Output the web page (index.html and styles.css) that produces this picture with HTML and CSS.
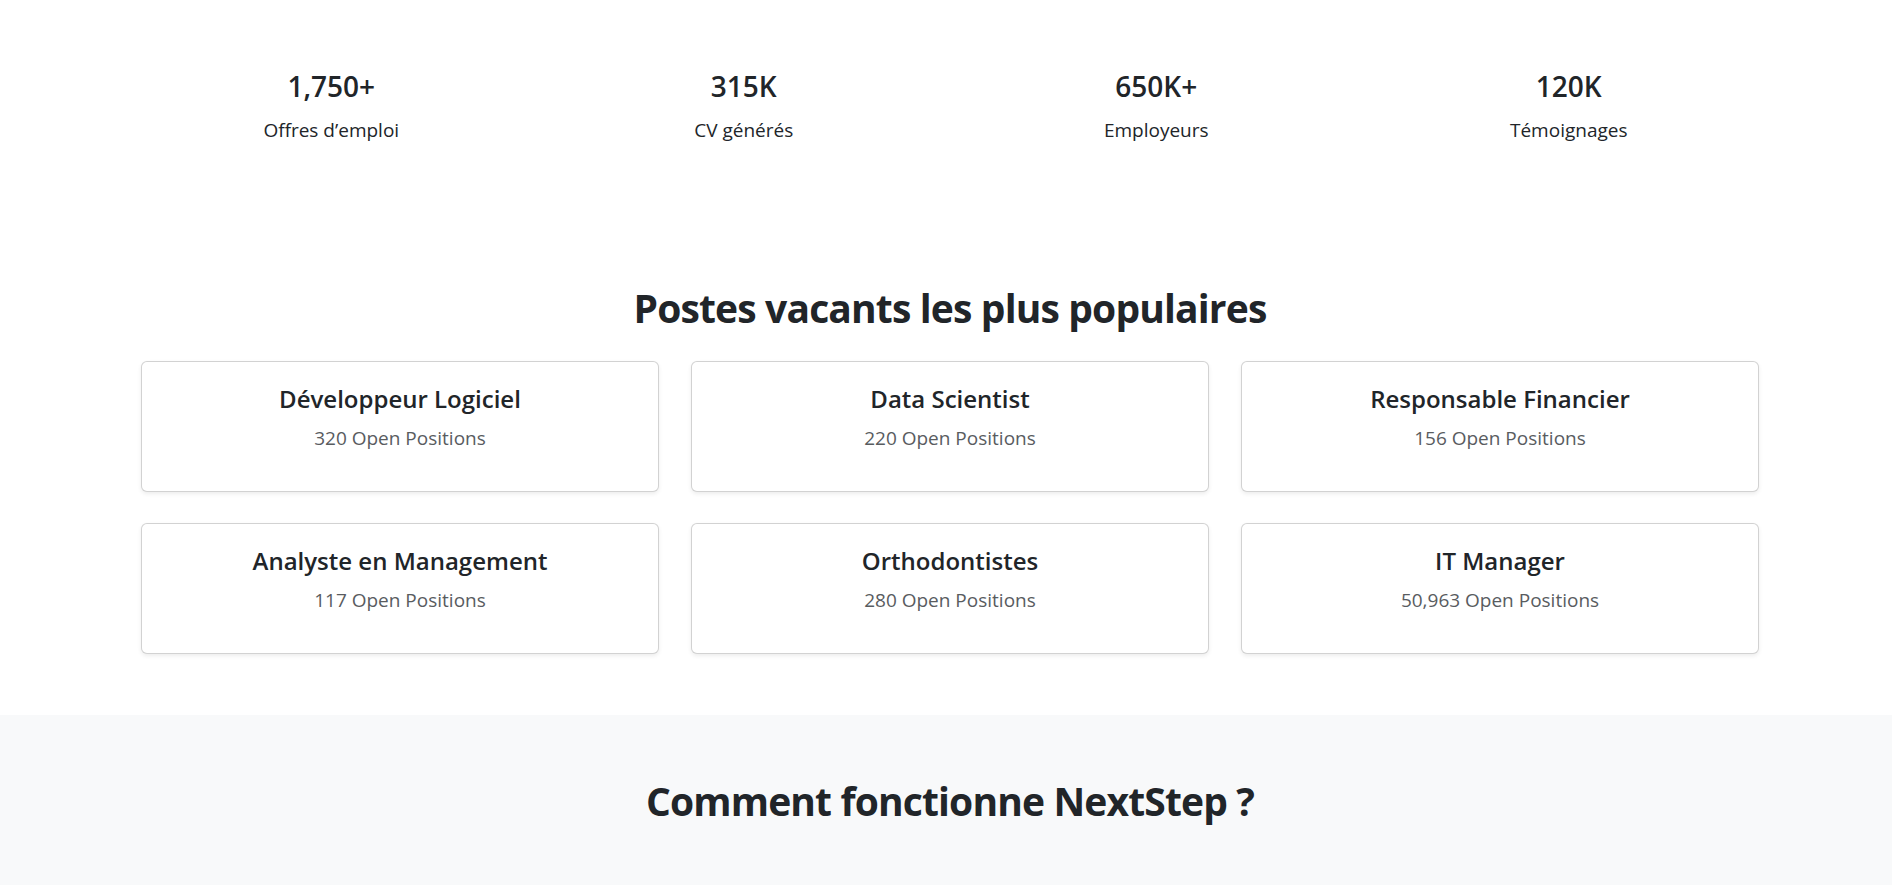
FILE: index.html
```html
<!DOCTYPE html>
<html lang="fr">
<head>
<meta charset="utf-8">
<title>NextStep</title>
<link rel="stylesheet" href="styles.css">
</head>
<body>
<section class="stats">
  <div class="stats-grid">
    <div class="stat"><div class="stat-num">1,750+</div><div class="stat-label">Offres d’emploi</div></div>
    <div class="stat"><div class="stat-num">315K</div><div class="stat-label">CV générés</div></div>
    <div class="stat"><div class="stat-num">650K+</div><div class="stat-label">Employeurs</div></div>
    <div class="stat"><div class="stat-num">120K</div><div class="stat-label">Témoignages</div></div>
  </div>
</section>

<section class="popular">
  <h2 class="section-title">Postes vacants les plus populaires</h2>
  <div class="cards">
    <div class="card"><h4 class="card-title">Développeur Logiciel</h4><p class="card-text">320 Open Positions</p></div>
    <div class="card"><h4 class="card-title">Data Scientist</h4><p class="card-text">220 Open Positions</p></div>
    <div class="card"><h4 class="card-title">Responsable Financier</h4><p class="card-text">156 Open Positions</p></div>
    <div class="card"><h4 class="card-title">Analyste en Management</h4><p class="card-text">117 Open Positions</p></div>
    <div class="card"><h4 class="card-title">Orthodontistes</h4><p class="card-text">280 Open Positions</p></div>
    <div class="card"><h4 class="card-title">IT Manager</h4><p class="card-text">50,963 Open Positions</p></div>
  </div>
</section>

<section class="how">
  <h2 class="section-title">Comment fonctionne NextStep ?</h2>
</section>
</body>
</html>
```

FILE: styles.css
```css
* { box-sizing: border-box; }

html, body {
  margin: 0;
  padding: 0;
}

body {
  font-family: "Open Sans", "Noto Sans", "Liberation Sans", sans-serif;
  color: #212529;
  background: #fff;
  min-height: 885px;
  display: flex;
  flex-direction: column;
}

.stats {
  padding: 69px 0 0 8px;
}

.stats-grid {
  width: 1650px;
  margin: 0 auto;
  display: grid;
  grid-template-columns: repeat(4, 1fr);
  text-align: center;
}

.stat-num {
  font-size: 28px;
  line-height: 34px;
  font-weight: 600;
  margin-bottom: 12px;
}

.stat-label {
  font-size: 19px;
  line-height: 30px;
}

.popular {
  padding: 139px 0 61px 8px;
}

.section-title {
  margin: 0;
  font-size: 39px;
  line-height: 48px;
  font-weight: 700;
  letter-spacing: -0.85px;
  text-align: center;
}

.cards {
  width: 1618px;
  margin: 29px auto 0;
  display: grid;
  grid-template-columns: repeat(3, 1fr);
  gap: 31px 32px;
}

.card {
  border: 1px solid rgba(0, 0, 0, 0.175);
  border-radius: 6px;
  box-shadow: 0 2px 4px rgba(0, 0, 0, 0.075);
  background: #fff;
  padding: 22px 16px 38px;
  text-align: center;
}

.card-title {
  margin: 0 0 10px;
  font-size: 24px;
  line-height: 29px;
  font-weight: 600;
}

.card-text {
  margin: 0;
  font-size: 19px;
  line-height: 30px;
  color: #595c5f;
}

.how {
  flex: 1;
  background: #f8f9fa;
  padding: 62px 0 40px 8px;
}
```
